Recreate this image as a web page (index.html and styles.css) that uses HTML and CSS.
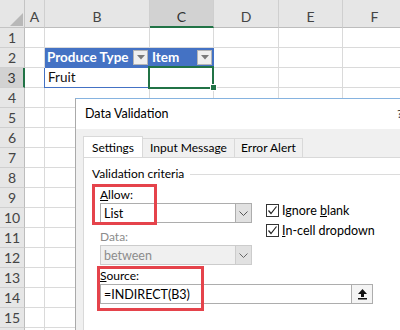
FILE: index.html
```html
<!DOCTYPE html>
<html lang="en">
<head>
    <meta charset="UTF-8">
    <title>Data Validation - INDIRECT</title>
    <link rel="stylesheet" href="styles.css">
</head>
<body>
<div class="app">
    <!-- Worksheet -->
    <div class="sheet">
        <div class="corner"><svg width="25" height="28" viewBox="0 0 25 28"><polygon points="23,13 23,26 10,26" fill="#b8b8b8"/></svg></div>
        <div class="ch">A</div><div class="ch">B</div><div class="ch sel-col">C</div><div class="ch">D</div><div class="ch">E</div><div class="ch">F</div>

        <div class="rh">1</div><div class="c"></div><div class="c"></div><div class="c"></div><div class="c"></div><div class="c"></div><div class="c"></div>
        <div class="rh">2</div><div class="c"></div>
        <div class="c tbl-head">Produce Type<span class="filter"><svg width="8" height="5" viewBox="0 0 8 5"><polygon points="0,0 8,0 4,4.5" fill="#7a7a7a"/></svg></span></div>
        <div class="c tbl-head">Item<span class="filter"><svg width="8" height="5" viewBox="0 0 8 5"><polygon points="0,0 8,0 4,4.5" fill="#7a7a7a"/></svg></span></div>
        <div class="c"></div><div class="c"></div><div class="c"></div>
        <div class="rh sel-row">3</div><div class="c"></div><div class="c tbl-cell">Fruit</div><div class="c active"></div><div class="c"></div><div class="c"></div><div class="c"></div>
        <div class="rh">4</div><div class="c"></div><div class="c"></div><div class="c"></div><div class="c"></div><div class="c"></div><div class="c"></div>
        <div class="rh">5</div><div class="c"></div><div class="c"></div><div class="c"></div><div class="c"></div><div class="c"></div><div class="c"></div>
        <div class="rh">6</div><div class="c"></div><div class="c"></div><div class="c"></div><div class="c"></div><div class="c"></div><div class="c"></div>
        <div class="rh">7</div><div class="c"></div><div class="c"></div><div class="c"></div><div class="c"></div><div class="c"></div><div class="c"></div>
        <div class="rh">8</div><div class="c"></div><div class="c"></div><div class="c"></div><div class="c"></div><div class="c"></div><div class="c"></div>
        <div class="rh">9</div><div class="c"></div><div class="c"></div><div class="c"></div><div class="c"></div><div class="c"></div><div class="c"></div>
        <div class="rh">10</div><div class="c"></div><div class="c"></div><div class="c"></div><div class="c"></div><div class="c"></div><div class="c"></div>
        <div class="rh">11</div><div class="c"></div><div class="c"></div><div class="c"></div><div class="c"></div><div class="c"></div><div class="c"></div>
        <div class="rh">12</div><div class="c"></div><div class="c"></div><div class="c"></div><div class="c"></div><div class="c"></div><div class="c"></div>
        <div class="rh">13</div><div class="c"></div><div class="c"></div><div class="c"></div><div class="c"></div><div class="c"></div><div class="c"></div>
        <div class="rh">14</div><div class="c"></div><div class="c"></div><div class="c"></div><div class="c"></div><div class="c"></div><div class="c"></div>
        <div class="rh">15</div><div class="c"></div><div class="c"></div><div class="c"></div><div class="c"></div><div class="c"></div><div class="c"></div>
        <div class="rh"></div><div class="c"></div><div class="c"></div><div class="c"></div><div class="c"></div><div class="c"></div><div class="c"></div>
    </div>

    <!-- Data Validation dialog -->
    <div class="dialog">
        <div class="title">Data Validation <span class="help">?</span></div>
        <div class="dlg-body">
            <div class="tabs">
                <div class="tab active">Settings</div>
                <div class="tab tab-input">Input Message</div>
                <div class="tab tab-error">Error Alert</div>
            </div>
            <div class="panel">
                <div class="legend">Validation criteria</div>
                <div class="criteria">
                    <div class="left-col">
                        <div class="label"><u>A</u>llow:</div>
                        <div class="select">
                            <span class="value">List</span>
                            <span class="drop"><svg width="9" height="5" viewBox="0 0 9 5"><polyline points="0.5,0.5 4.5,4.5 8.5,0.5" fill="none" stroke="#555" stroke-width="1"/></svg></span>
                        </div>
                        <div class="label disabled label-data">Data:</div>
                        <div class="select disabled">
                            <span class="value">between</span>
                            <span class="drop"><svg width="9" height="5" viewBox="0 0 9 5"><polyline points="0.5,0.5 4.5,4.5 8.5,0.5" fill="none" stroke="#666" stroke-width="1"/></svg></span>
                        </div>
                    </div>
                    <div class="right-col">
                        <div class="check-row">
                            <span class="box"><svg width="11" height="11" viewBox="0 0 11 11"><polyline points="1.5,5.5 4,8.5 9.5,1.5" fill="none" stroke="#222" stroke-width="1.2"/></svg></span>
                            <span>Ignore <u>b</u>lank</span>
                        </div>
                        <div class="check-row">
                            <span class="box"><svg width="11" height="11" viewBox="0 0 11 11"><polyline points="1.5,5.5 4,8.5 9.5,1.5" fill="none" stroke="#222" stroke-width="1.2"/></svg></span>
                            <span><u>I</u>n-cell dropdown</span>
                        </div>
                    </div>
                </div>
                <div class="source">
                    <div class="label label-source"><u>S</u>ource:</div>
                    <div class="input">
                        <span class="value">=INDIRECT(B3)</span>
                        <span class="ref-btn"><svg width="11" height="12" viewBox="0 0 11 12"><polygon points="5.5,1 10,6 7,6 7,9 4,9 4,6 1,6" fill="#111"/><rect x="1" y="10" width="9" height="1.5" fill="#111"/></svg></span>
                    </div>
                </div>
            </div>
        </div>

        <!-- highlight boxes drawn over the screenshot -->
        <div class="mark mark-allow"></div>
        <div class="mark mark-source"></div>
    </div>
</div>
</body>
</html>
```

FILE: styles.css
```css
body {
    margin: 0;
    padding: 0;
    background: #fff;
    overflow: hidden;
    font-family: Lato, "Liberation Sans", sans-serif;
}
.app {
    position: relative;
    width: 400px;
    height: 330px;
    overflow: hidden;
}

/* worksheet */
.sheet {
    display: grid;
    grid-template-columns: 25px 20px 105px 64px 65px 64px 64px;
    grid-template-rows: 28px;
    grid-auto-rows: 20px;
    font-size: 13.5px;
    color: #111;
}
.sheet > div {
    box-sizing: border-box;
}
.corner {
    background: #e6e6e6;
    border-right: 1px solid #c4c4c4;
    border-bottom: 1px solid #c4c4c4;
}
.corner svg {
    display: block;
}
.ch {
    background: #e6e6e6;
    border-right: 1px solid #cfcfcf;
    border-bottom: 1px solid #bdbdbd;
    color: #444;
    font-size: 14px;
    text-align: center;
    padding-top: 8px;
}
.ch.sel-col {
    background: #d2d2d2;
    border-bottom: 2px solid #217346;
    color: #333;
}
.rh {
    background: #e6e6e6;
    border-right: 1px solid #bdbdbd;
    border-bottom: 1px solid #cfcfcf;
    color: #444;
    font-size: 14px;
    text-align: center;
    line-height: 19px;
}
.rh.sel-row {
    background: #d2d2d2;
    border-right: 2px solid #217346;
    color: #333;
}
.c {
    border-right: 1px solid #dadada;
    border-bottom: 1px solid #dadada;
    line-height: 19px;
    padding-left: 2px;
    white-space: nowrap;
}
.c.tbl-head {
    background: #4472c4;
    border-color: #4472c4;
    color: #fff;
    font-weight: bold;
    display: flex;
    align-items: center;
}
.filter {
    margin-left: auto;
    margin-right: 1px;
    width: 15px;
    height: 15px;
    box-sizing: border-box;
    background: #efefef;
    border: 1px solid #b5b5b5;
    display: flex;
    align-items: center;
    justify-content: center;
}
.c.tbl-cell {
    border-left: 1px solid #4472c4;
    border-bottom: 1px solid #4472c4;
    margin-left: -1px;
    padding-left: 3px;
}
.c.active {
    position: relative;
    border-bottom-color: #4472c4;
}
.c.active::before {
    content: "";
    position: absolute;
    left: -2px;
    top: -2px;
    right: -1px;
    bottom: -2px;
    border: 2px solid #217346;
}
.c.active::after {
    content: "";
    position: absolute;
    right: -4px;
    bottom: -4px;
    width: 5px;
    height: 5px;
    background: #217346;
    border: 1px solid #fff;
}

/* dialog */
.dialog {
    position: absolute;
    left: 75px;
    top: 98px;
    width: 345px;
    height: 250px;
    background: #f0f0f0;
    border-top: 1px solid #86b3e0;
    border-left: 1px solid #aaa;
    font-size: 12px;
    color: #000;
}
.title {
    position: relative;
    height: 30px;
    line-height: 30px;
    background: #fff;
    padding-left: 9px;
    font-size: 12.5px;
}
.help {
    position: absolute;
    left: 321px;
    top: 0;
    font-size: 12px;
    color: #333;
}
.dlg-body {
    padding: 9px 0 0 7px;
}
.tabs {
    display: flex;
    height: 19px;
}
.tab {
    box-sizing: border-box;
    height: 19px;
    line-height: 18px;
    text-align: center;
    border: 1px solid #d9d9d9;
    border-bottom: none;
    margin-left: -1px;
    background: #f0f0f0;
}
.tab.active {
    width: 60px;
    height: 21px;
    margin-top: -2px;
    margin-left: 0;
    line-height: 22px;
    background: #fff;
    position: relative;
    z-index: 1;
}
.tab-input {
    width: 93px;
}
.tab-error {
    width: 69px;
}
.panel {
    height: 200px;
    background: #fff;
    border: 1px solid #d9d9d9;
    padding: 8px 0 0 8px;
}
.legend {
    display: flex;
    align-items: center;
    line-height: 16px;
}
.legend::after {
    content: "";
    flex: 1;
    height: 1px;
    background: #dcdcdc;
    margin-left: 6px;
}
.criteria {
    display: flex;
    margin-top: 5px;
    padding-left: 8px;
}
.left-col {
    width: 152px;
}
.label {
    line-height: 16px;
}
.label.disabled {
    color: #8c8c8c;
}
.label-data {
    margin-top: 6px;
}
.select, .input {
    box-sizing: border-box;
    height: 20px;
    border: 1px solid #adadad;
    background: #fff;
    display: flex;
    align-items: center;
}
.select .value, .input .value {
    flex: 1;
    padding-left: 3px;
    font-size: 12.5px;
}
.select.disabled {
    background: #f0f0f0;
    border-color: #cccccc;
    color: #8c8c8c;
}
.drop {
    width: 15px;
    height: 18px;
    background: #e1e1e1;
    border-left: 1px solid #adadad;
    display: flex;
    align-items: center;
    justify-content: center;
}
.select.disabled .drop {
    border-left-color: #cccccc;
}
.right-col {
    margin-left: 14px;
    margin-top: 15px;
    display: flex;
    flex-direction: column;
    gap: 4px;
}
.check-row {
    display: flex;
    align-items: center;
    height: 16px;
    font-size: 12.5px;
}
.box {
    box-sizing: border-box;
    width: 13px;
    height: 13px;
    border: 1px solid #333;
    background: #fff;
    margin-right: 3px;
    display: flex;
    align-items: center;
    justify-content: center;
}
.source {
    padding-left: 8px;
}
.label-source {
    margin-top: 3px;
}
.input {
    width: 273px;
}
.ref-btn {
    width: 20px;
    height: 18px;
    background: #f4f4f4;
    border-left: 1px solid #adadad;
    display: flex;
    align-items: center;
    justify-content: center;
}

/* red annotation boxes */
.mark {
    position: absolute;
    box-sizing: border-box;
    border: 3px solid #e5434b;
}
.mark-allow {
    left: 16px;
    top: 85px;
    width: 65px;
    height: 41px;
}
.mark-source {
    left: 21px;
    top: 167px;
    width: 107px;
    height: 45px;
}
```
